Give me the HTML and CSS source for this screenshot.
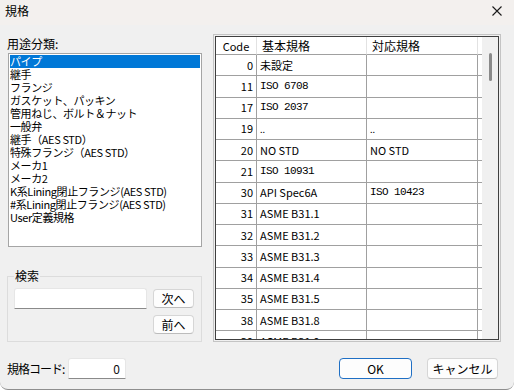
FILE: index.html
```html
<!DOCTYPE html>
<html lang="ja">
<head>
<meta charset="UTF-8">
<title>規格</title>
<link rel="stylesheet" href="styles.css">
</head>
<body>
<div class="window">
    <div class="titlebar">
        <span class="title">規格</span>
        <svg class="close" width="10" height="10" viewBox="0 0 10 10">
            <path d="M0.5 0.5 L9.5 9.5 M9.5 0.5 L0.5 9.5" stroke="#1a1a1a" stroke-width="1.1" fill="none"/>
        </svg>
    </div>
    <div class="content">
        <!-- left side: category list, search, code -->
        <div class="left">
            <div class="label">用途分類:</div>
            <ul class="listbox">
                <li class="selected">パイプ</li>
                <li>継手</li>
                <li>フランジ</li>
                <li>ガスケット、パッキン</li>
                <li>管用ねじ、ボルト＆ナット</li>
                <li>一般弁</li>
                <li>継手（AES STD）</li>
                <li>特殊フランジ（AES STD）</li>
                <li>メーカ1</li>
                <li>メーカ2</li>
                <li>K系Lining閉止フランジ(AES STD)</li>
                <li>#系Lining閉止フランジ(AES STD)</li>
                <li>User定義規格</li>
            </ul>
            <fieldset class="search">
                <legend>検索</legend>
                <div class="search-grid">
                    <div class="textbox"></div>
                    <button class="btn small">次へ</button>
                    <button class="btn small prev">前へ</button>
                </div>
            </fieldset>
            <div class="code-row">
                <span class="code-label">規格コード:</span>
                <div class="textbox code-box">0</div>
            </div>
        </div>

        <!-- right side: standards grid -->
        <div class="right">
            <div class="grid-frame">
                <div class="grid">
                    <div class="rows">
                        <div class="row head">
                            <div class="cell center">Code</div>
                            <div class="cell">基本規格</div>
                            <div class="cell">対応規格</div>
                            <div class="cell"></div>
                        </div>
                        <div class="row"><div class="cell num">0</div><div class="cell">未設定</div><div class="cell"></div><div class="cell"></div></div>
                        <div class="row"><div class="cell num">11</div><div class="cell mono">ISO 6708</div><div class="cell"></div><div class="cell"></div></div>
                        <div class="row"><div class="cell num">17</div><div class="cell mono">ISO 2037</div><div class="cell"></div><div class="cell"></div></div>
                        <div class="row"><div class="cell num">19</div><div class="cell dots">..</div><div class="cell dots">..</div><div class="cell"></div></div>
                        <div class="row"><div class="cell num">20</div><div class="cell">NO STD</div><div class="cell">NO STD</div><div class="cell"></div></div>
                        <div class="row"><div class="cell num">21</div><div class="cell mono">ISO 10931</div><div class="cell"></div><div class="cell"></div></div>
                        <div class="row"><div class="cell num">30</div><div class="cell">API Spec6A</div><div class="cell mono">ISO 10423</div><div class="cell"></div></div>
                        <div class="row"><div class="cell num">31</div><div class="cell">ASME B31.1</div><div class="cell"></div><div class="cell"></div></div>
                        <div class="row"><div class="cell num">32</div><div class="cell">ASME B31.2</div><div class="cell"></div><div class="cell"></div></div>
                        <div class="row"><div class="cell num">33</div><div class="cell">ASME B31.3</div><div class="cell"></div><div class="cell"></div></div>
                        <div class="row"><div class="cell num">34</div><div class="cell">ASME B31.4</div><div class="cell"></div><div class="cell"></div></div>
                        <div class="row"><div class="cell num">35</div><div class="cell">ASME B31.5</div><div class="cell"></div><div class="cell"></div></div>
                        <div class="row"><div class="cell num">38</div><div class="cell">ASME B31.8</div><div class="cell"></div><div class="cell"></div></div>
                        <div class="row"><div class="cell num">39</div><div class="cell">ASME B31.9</div><div class="cell"></div><div class="cell"></div></div>
                    </div>
                    <div class="vscroll"><div class="thumb"></div></div>
                </div>
            </div>
            <div class="buttons">
                <button class="btn big default">OK</button>
                <button class="btn big">キャンセル</button>
            </div>
        </div>
    </div>
</div>
</body>
</html>
```

FILE: styles.css
```css
html, body {
    margin: 0;
    background: #ffffff;
}

body {
    font-family: "Noto Sans CJK JP", sans-serif;
    font-size: 12px;
    color: #000;
}

.window {
    width: 514px;
    height: 390px;
    background: #f0f0f0;
    border-bottom: 1px solid #8e8e8e;
    border-radius: 0 0 8px 8px;
    box-sizing: border-box;
    overflow: hidden;
}

.titlebar {
    height: 22px;
    padding: 0 12px 3px 5px;
    background: #f3f0ee;
    display: flex;
    align-items: center;
    justify-content: space-between;
}

.title {
    line-height: 14px;
}

.content {
    display: flex;
    align-items: flex-start;
    gap: 11px;
    padding-left: 7px;
}

.left {
    width: 195px;
}

.label {
    margin-top: 11px;
    line-height: 16px;
}

.listbox {
    list-style: none;
    margin: 1px 0 0 1px;
    padding: 1px;
    width: 194px;
    height: 194px;
    box-sizing: border-box;
    background: #fff;
    border: 1px solid #a5a5a5;
    overflow: hidden;
    font-size: 11px;
    letter-spacing: -0.4px;
}

.listbox li {
    line-height: 13px;
    height: 13px;
    white-space: nowrap;
}

.listbox li.selected {
    background: #0078d7;
    color: #fff;
}

.search {
    margin: 22px 0 0 0;
    padding: 5px 7px 7px 6px;
    width: 195px;
    box-sizing: border-box;
    border: 1px solid #dcdcdc;
}

.search legend {
    padding: 0 1px;
    line-height: 14px;
}

.search-grid {
    display: grid;
    grid-template-columns: 133px 41px;
    column-gap: 6px;
    row-gap: 6px;
    align-items: center;
}

.textbox {
    height: 21px;
    box-sizing: border-box;
    background: #fff;
    border: 1px solid #e6e6e6;
    border-bottom-color: #8a8a8a;
    border-radius: 3px 3px 0 0;
}

.btn {
    font: inherit;
    color: #000;
    padding: 0;
    background: #fdfdfd;
    border: 1px solid #d6d6d6;
    border-bottom-color: #bcbcbc;
    border-radius: 4px;
    box-sizing: border-box;
}

.small {
    width: 41px;
    height: 19px;
    line-height: 16px;
}

.prev {
    grid-column: 2;
}

.code-row {
    margin-top: 16px;
    display: flex;
    align-items: center;
}

.code-label {
    width: 61px;
    white-space: nowrap;
    letter-spacing: -1px;
}

.code-box {
    width: 58px;
    text-align: right;
    padding-right: 5px;
    line-height: 19px;
    color: #111;
}

.right {
    width: 288px;
    margin-top: 9px;
}

.grid-frame {
    height: 308px;
    box-sizing: border-box;
    border: 1px solid #c4c4c4;
    padding: 1px;
}

.grid {
    height: 100%;
    box-sizing: border-box;
    border: 1px solid #3f3f3f;
    background: #fff;
    display: flex;
    overflow: hidden;
}

.rows {
    width: 266px;
}

.row {
    display: grid;
    grid-template-columns: 41px 110px 111px 4px;
    height: 21.25px;
    font-size: 11px;
}

.row.head {
    height: 18px;
    font-size: 12px;
}

.cell {
    box-sizing: border-box;
    border-right: 1px solid #a0a0a0;
    border-bottom: 1px solid #a0a0a0;
    padding: 0 3px 1px 3px;
    display: flex;
    align-items: center;
    white-space: nowrap;
    overflow: hidden;
}

.head .cell {
    border-right-color: #e2e2e2;
    padding: 0 0 0 5px;
}

.head .cell.center {
    justify-content: center;
    padding: 0;
    font-size: 11px;
}

.cell.num {
    justify-content: flex-end;
}

.cell.mono {
    font-family: "Liberation Mono", monospace;
    font-size: 11px;
    letter-spacing: -0.6px;
}

.cell.dots {
    align-items: flex-end;
    padding-bottom: 3px;
    font-size: 9px;
}

.vscroll {
    flex: 1;
    background: #f0f0f0;
    padding: 16px 0 0 7px;
}

.thumb {
    width: 3px;
    height: 28px;
    border-radius: 2px;
    background: #8a8a8a;
}

.buttons {
    margin-top: 16px;
    display: flex;
    justify-content: flex-end;
    gap: 15px;
    padding-right: 3px;
}

.big {
    height: 21px;
    width: 71px;
}

.big.default {
    width: 73px;
    border: 1px solid #1f6fc4;
}
```
